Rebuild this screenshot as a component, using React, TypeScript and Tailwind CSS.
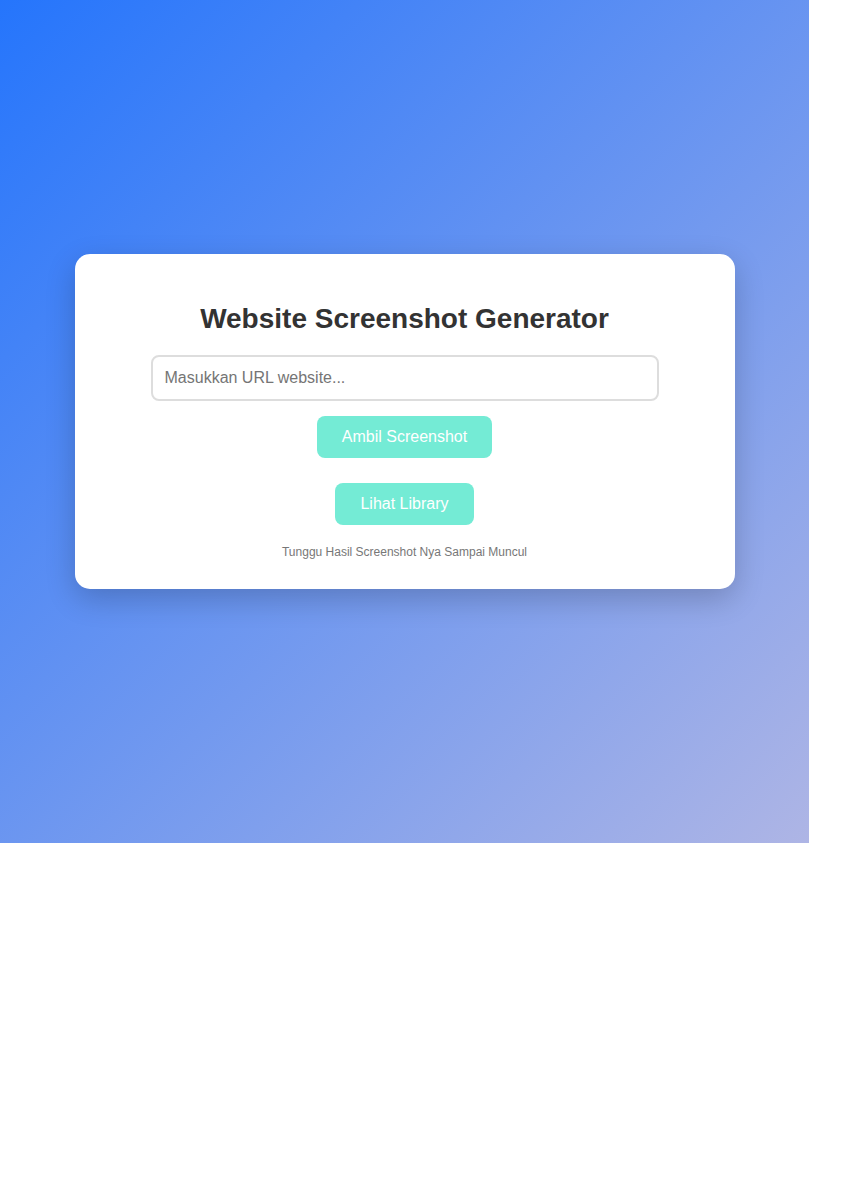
import React from "react";

export default function App() {
  return (
    <div className="w-[841px] h-[1200px] bg-white" style={{ fontFamily: '"Liberation Sans", Arial, sans-serif' }}>
      <div className="w-[809px] h-[843px] flex items-center justify-center bg-[linear-gradient(135deg,#2575fc_0%,#aeb5e5_100%)]">
        <div className="w-[660px] h-[335px] bg-white rounded-[15px] shadow-[0_10px_30px_rgba(0,0,0,0.2)] flex flex-col items-center pt-[49px]">
          <h1 className="text-[28px] leading-[32px] font-bold text-[#333]">Website Screenshot Generator</h1>
          <input
            type="text"
            placeholder="Masukkan URL website..."
            className="mt-[20px] w-[508px] h-[46px] border-2 border-[#ddd] rounded-[8px] px-[12px] text-[16px] text-[#333] placeholder:text-[#757575] outline-none"
          />
          <button className="mt-[15px] h-[42px] px-[25px] rounded-[8px] bg-[#74ebd5] text-white text-[16px]">Ambil Screenshot</button>
          <button className="mt-[25px] h-[42px] px-[25px] rounded-[8px] bg-[#74ebd5] text-white text-[16px]">Lihat Library</button>
          <p className="mt-[20px] text-[12px] leading-[14px] text-[#777]">Tunggu Hasil Screenshot Nya Sampai Muncul</p>
        </div>
      </div>
    </div>
  );
}
